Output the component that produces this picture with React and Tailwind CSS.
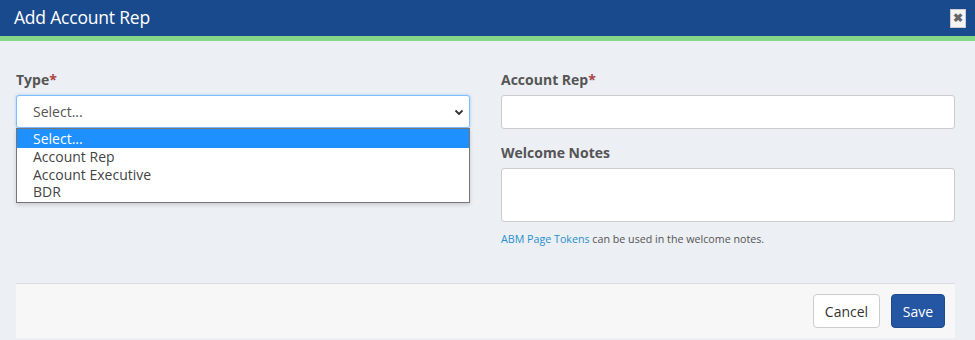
export default function App() {
  const font = { fontFamily: '"Open Sans", "Noto Sans", sans-serif' };
  return (
    <div className="w-[975px] h-[340px] bg-[#eceff4] overflow-hidden text-[#555]" style={font}>
      <div className="h-[36px] bg-[#1a4a8e] flex items-center justify-between pl-[14px] pr-[9px]">
        <div className="text-white text-[17.5px] leading-none tracking-[-0.2px]">Add Account Rep</div>
        <div className="w-[16px] h-[19px] bg-[#f4f4f4] border border-[#ccc] flex items-center justify-center text-[#666] text-[12px] font-bold leading-none">✖</div>
      </div>
      <div className="h-[5px] bg-[#84d887]" />
      <div className="pl-[16px] pr-[20px] pt-[29px]">
        <div className="grid grid-cols-2 gap-[31px]">
          <div>
            <div className="text-[14px] font-bold leading-[20px] mb-[5px]">
              Type<span className="text-[#a94442]">*</span>
            </div>
            <div className="relative">
              <div className="h-[33px] bg-white border border-[#80bdff] rounded-[3px] shadow-[0_0_3px_rgba(0,123,255,0.35)] flex items-center justify-between pl-[16px] pr-[4px]">
                <span className="text-[14px]">Select...</span>
                <svg width="12" height="12" viewBox="0 0 12 12" fill="none" stroke="#333" strokeWidth="1.8">
                  <path d="M2.5 4.5 L6 8 L9.5 4.5" />
                </svg>
              </div>
              <div className="absolute left-0 right-0 top-[33px] bg-white border border-[#767676] shadow-[0_2px_4px_rgba(0,0,0,0.15)] text-[14px] leading-[17.5px] text-[#444]">
                <div className="bg-[#1e90ff] text-white pl-[16px] h-[19px] leading-[19px]">Select...</div>
                <div className="pl-[16px]">Account Rep</div>
                <div className="pl-[16px]">Account Executive</div>
                <div className="pl-[16px] pb-[1px]">BDR</div>
              </div>
            </div>
          </div>
          <div>
            <div className="text-[14px] font-bold leading-[20px] mb-[5px]">
              Account Rep<span className="text-[#a94442]">*</span>
            </div>
            <div className="h-[34px] bg-white border border-[#ccc] rounded-[3px]" />
            <div className="text-[14px] font-bold leading-[20px] mt-[14px] mb-[5px]">Welcome Notes</div>
            <div className="h-[54px] bg-white border border-[#ccc] rounded-[3px]" />
            <div className="text-[10.7px] mt-[9px] leading-[16px]">
              <span className="text-[#2a8fcb]">ABM Page Tokens</span> can be used in the welcome notes.
            </div>
          </div>
        </div>
        <div className="mt-[36px] h-[55px] bg-[#f7f7f7] border-t border-[#d9dcdf] flex items-center justify-end gap-[11px] pr-[10px]">
          <button className="h-[34px] w-[67px] bg-white border border-[#ccc] rounded-[4px] text-[14px] text-[#333]">Cancel</button>
          <button className="h-[34px] w-[54px] bg-[#2456a4] border border-[#1e4a8e] rounded-[4px] text-[14px] text-white">Save</button>
        </div>
      </div>
    </div>
  );
}
